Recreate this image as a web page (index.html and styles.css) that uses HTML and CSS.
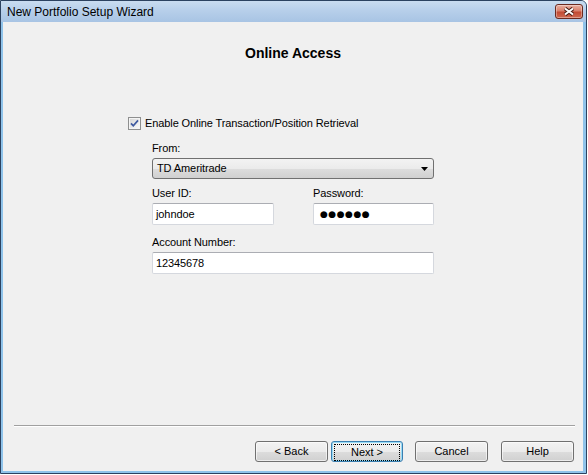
FILE: index.html
```html
<!DOCTYPE html>
<html>
<head>
<meta charset="utf-8">
<link rel="stylesheet" href="styles.css">
</head>
<body>
<div class="window">
  <div class="titlebar">
    <span class="title">New Portfolio Setup Wizard</span>
    <span class="close">
      <svg width="12" height="9" viewBox="0 0 12 9">
        <path d="M2 1.5 L10 7.5 M10 1.5 L2 7.5" stroke="#4a1f18" stroke-width="4" fill="none"/>
        <path d="M2 1.5 L10 7.5 M10 1.5 L2 7.5" stroke="#ffffff" stroke-width="2" fill="none"/>
      </svg>
    </span>
  </div>
  <div class="frame">
    <div class="client">
      <h1 class="heading">Online Access</h1>
      <div class="form">
        <div class="check-row">
          <span class="checkbox">
            <svg width="13" height="13" viewBox="0 0 13 13">
              <defs>
                <linearGradient id="cb" x1="0" y1="0" x2="1" y2="1">
                  <stop offset="0" stop-color="#d8d8d8"/>
                  <stop offset="1" stop-color="#f8f8f8"/>
                </linearGradient>
              </defs>
              <rect x="0.5" y="0.5" width="12" height="12" fill="#f4f4f4" stroke="#8e8f8f"/>
              <rect x="2" y="2" width="9" height="9" fill="url(#cb)"/>
              <path d="M3 6.3 L5.3 8.8 L10 3.4" stroke="#3f5aa0" stroke-width="1.7" fill="none"/>
            </svg>
          </span>
          <span class="check-label">Enable Online Transaction/Position Retrieval</span>
        </div>
        <div class="fields">
          <div class="label first">From:</div>
          <div class="select">
            <span>TD Ameritrade</span>
            <svg width="7" height="4" viewBox="0 0 7 4"><path d="M0 0 H7 L3.5 4 Z" fill="#000"/></svg>
          </div>
          <div class="pair">
            <div class="col">
              <div class="label">User ID:</div>
              <div class="input">johndoe</div>
            </div>
            <div class="col">
              <div class="label">Password:</div>
              <div class="input password">●●●●●●</div>
            </div>
          </div>
          <div class="label account">Account Number:</div>
          <div class="input">12345678</div>
        </div>
      </div>
      <div class="footer">
        <div class="separator"></div>
        <div class="buttons">
          <div class="btn">&lt; Back</div>
          <div class="btn default next"><span class="focus">Next &gt;</span></div>
          <div class="btn cancel">Cancel</div>
          <div class="btn help">Help</div>
        </div>
      </div>
    </div>
  </div>
</div>
</body>
</html>
```

FILE: styles.css
```css
html, body {
  margin: 0;
  padding: 0;
  background: #ffffff;
  font-family: "Liberation Sans", Arial, sans-serif;
  color: #000;
}

.window {
  width: 587px;
  height: 474px;
  box-sizing: border-box;
  border: 1px solid #2c4260;
  border-top-right-radius: 6px;
  display: flex;
  flex-direction: column;
  background: #8fc3ea;
  overflow: hidden;
}

.titlebar {
  height: 21px;
  flex: none;
  display: flex;
  align-items: center;
  justify-content: space-between;
  padding: 0 3px 0 6px;
  background: linear-gradient(#c9dcf0, #b7cfea 45%, #a8c4e4);
}

.title {
  font-size: 12px;
  line-height: 14px;
}

.close {
  width: 28px;
  height: 15px;
  box-sizing: border-box;
  border: 1px solid #6b2a20;
  border-radius: 3px;
  background: linear-gradient(#e9b0a2, #d9806c 45%, #c24a33 55%, #cf6a52);
  box-shadow: inset 0 0 0 1px rgba(255, 255, 255, 0.35);
  display: flex;
  align-items: center;
  justify-content: center;
}

.frame {
  flex: 1;
  display: flex;
  padding: 0 3px 2px 2px;
}

.client {
  flex: 1;
  background: #f0f0f0;
  display: flex;
  flex-direction: column;
}

.heading {
  margin: 0;
  padding-top: 23px;
  font-size: 14px;
  line-height: 16px;
  font-weight: bold;
  text-align: center;
}

.form {
  margin-top: 54px;
  padding-left: 125px;
  font-size: 11px;
  letter-spacing: -0.1px;
}

.check-row {
  display: flex;
  align-items: center;
  height: 16px;
}

.checkbox {
  width: 13px;
  height: 13px;
  display: flex;
  margin-right: 4px;
}

.check-label {
  line-height: 16px;
}

.fields {
  margin-left: 24px;
  width: 282px;
  margin-top: 10px;
}

.label {
  height: 14px;
  line-height: 14px;
  margin-bottom: 3px;
}

.select {
  height: 21px;
  box-sizing: border-box;
  border: 1px solid #707070;
  border-radius: 3px;
  background: linear-gradient(#f3f3f3, #ebebeb 50%, #dddddd 50%, #d0d0d0);
  display: flex;
  align-items: center;
  justify-content: space-between;
  padding: 0 5px 0 4px;
  line-height: 19px;
}

.pair {
  margin-top: 7px;
  display: grid;
  grid-template-columns: 122px 121px;
  column-gap: 39px;
}

.input {
  height: 22px;
  box-sizing: border-box;
  border: 1px solid #d5d8de;
  border-top-color: #abadb3;
  border-radius: 2px;
  background: #ffffff;
  padding-left: 3px;
  line-height: 20px;
}

.password {
  padding-left: 6px;
  font-family: "DejaVu Sans", sans-serif;
  font-size: 9px;
  letter-spacing: 0.5px;
}

.account {
  margin-top: 10px;
}

.footer {
  margin-top: auto;
}

.separator {
  height: 1px;
  margin: 0 8px 0 11px;
  background: #a0a0a0;
  border-bottom: 1px solid #ffffff;
}

.buttons {
  margin-top: 14px;
  padding: 0 9px 9px 0;
  display: flex;
  justify-content: flex-end;
}

.btn {
  width: 73px;
  height: 21px;
  box-sizing: border-box;
  border: 1px solid #707070;
  border-radius: 3px;
  background: linear-gradient(#f3f3f3, #ebebeb 50%, #dddddd 50%, #d0d0d0);
  box-shadow: inset 0 0 0 1px rgba(255, 255, 255, 0.6);
  font-size: 11px;
  line-height: 19px;
  text-align: center;
}

.next {
  width: 72px;
  margin-left: 3px;
  border-color: #3c7fb1;
  box-shadow: inset 0 0 0 1px #97dcf6;
  padding: 2px;
}

.focus {
  display: block;
  height: 15px;
  line-height: 15px;
  border: 1px dotted #000;
}

.cancel {
  margin-left: 12px;
}

.help {
  margin-left: 13px;
}
```
